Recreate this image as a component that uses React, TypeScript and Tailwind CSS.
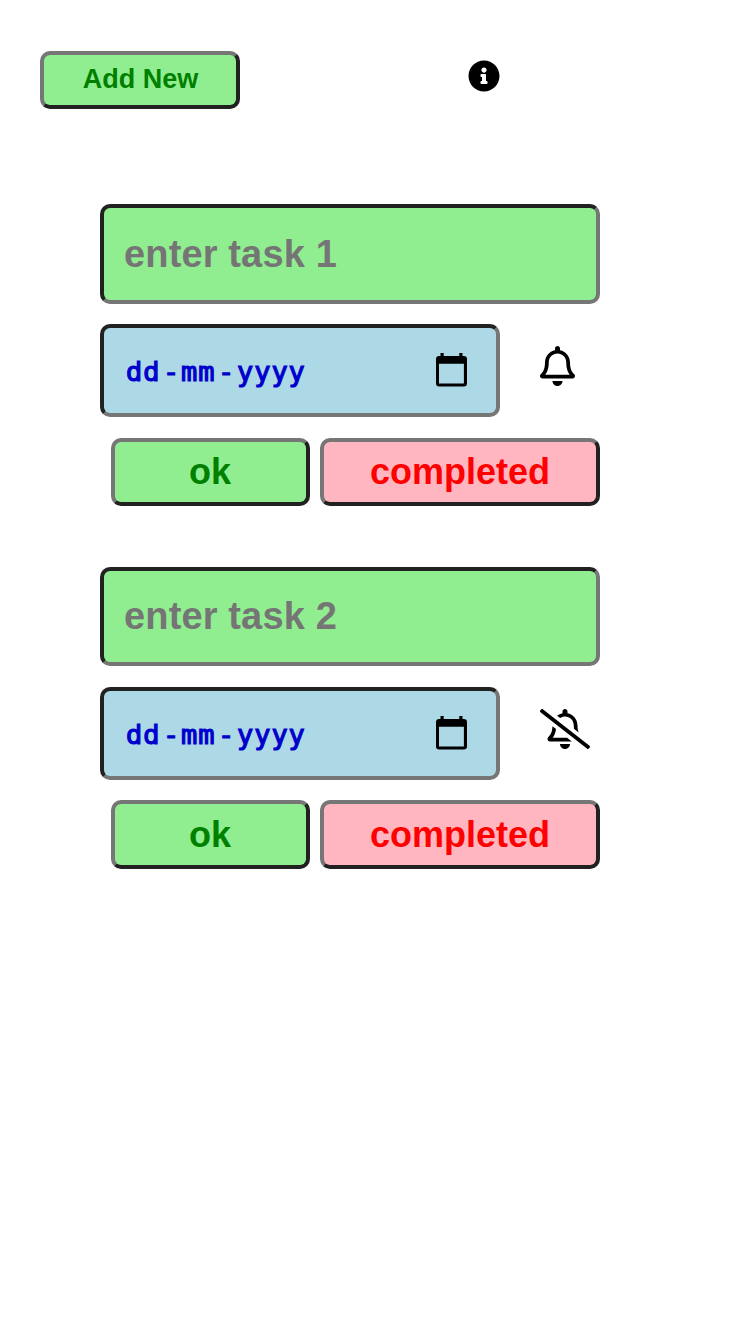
import { FaInfoCircle, FaRegBell, FaRegBellSlash } from "react-icons/fa";

const raised =
  "border-4 border-t-[#767676] border-l-[#767676] border-r-[#212121] border-b-[#212121] rounded-[10px]";
const sunken =
  "border-4 border-t-[#212121] border-l-[#212121] border-r-[#767676] border-b-[#767676] rounded-[10px]";

function CalendarIcon() {
  return (
    <svg className="mb-px h-[34px] w-[31px]" viewBox="0 0 31 34" aria-hidden="true">
      <path
        fillRule="evenodd"
        d="M4.500 0h3.200v3h15.600V0h3.200v3h1.300a3.200 3.200 0 0 1 3.200 3.200v24a3.200 3.200 0 0 1-3.200 3.200H3.200A3.200 3.200 0 0 1 0 30.200v-24A3.200 3.200 0 0 1 3.200 3h1.300zM3 10.800v19.700h24.900V10.800z"
      />
    </svg>
  );
}

function Task({ number, muted }: { number: number; muted?: boolean }) {
  return (
    <section className="w-[500px]">
      <input
        placeholder={`enter task ${number}`}
        className={`${sunken} block h-[99.5px] w-full bg-[#90ee90] pt-px pl-5 text-[38px] font-bold tracking-[0.14px] placeholder:text-[#757575] placeholder:opacity-100`}
      />
      <div className="mt-[20.5px] flex">
        <div
          className={`${sunken} flex h-[93px] w-[400px] shrink-0 items-center justify-between bg-[#add8e6] pr-[29px] pl-[22px]`}
        >
          <div className="flex pt-[3px] font-['DejaVu_Sans_Mono',monospace] text-[27px] leading-[34px] tracking-[0.95px] text-[#0000cd] [-webkit-text-stroke:1.2px_#0000cd]">
            <span className="w-[37px]">dd</span>
            <span className="w-[18px]">-</span>
            <span className="w-[37px]">mm</span>
            <span className="w-[19px]">-</span>
            <span>yyyy</span>
          </div>
          <CalendarIcon />
        </div>
        <div className="mt-[22px] ml-10 shrink-0">
          {muted ? (
            <FaRegBellSlash className="h-10 w-[50px]" />
          ) : (
            <FaRegBell className="h-10 w-[35px]" />
          )}
        </div>
      </div>
      <div className="mt-[20.5px] flex gap-2.5 pl-[11px] text-[36px] leading-none font-bold">
        <button className={`${raised} h-[68.6px] w-[199px] bg-[#90ee90] pt-[0.4px] pr-px text-[#008000]`}>
          ok
        </button>
        <button className={`${raised} h-[68.6px] w-[280px] bg-[#ffb6c1] pt-[0.4px] text-[#ff0000]`}>
          completed
        </button>
      </div>
    </section>
  );
}

export default function App() {
  return (
    <main className="min-h-screen bg-white font-['Liberation_Sans',Arial,sans-serif] text-black">
      <header className="flex pt-[51px] pl-10">
        <button
          className={`${raised} h-[58px] w-[200px] bg-[#90ee90] pb-[2px] pl-px text-[27px] leading-none font-bold text-[#008000]`}
        >
          Add New
        </button>
        <FaInfoCircle className="mt-[9px] ml-[228px] size-8" />
      </header>
      <div className="flex flex-col gap-[60.6px] pt-[95px] pl-[100px]">
        <Task number={1} />
        <Task number={2} muted />
      </div>
    </main>
  );
}
